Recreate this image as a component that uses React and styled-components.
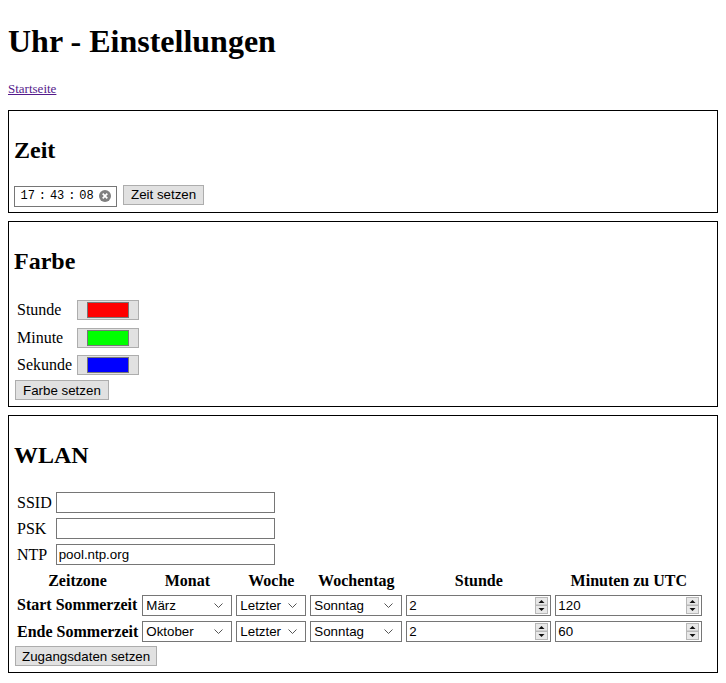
import React from 'react';
import styled, { createGlobalStyle } from 'styled-components';

const Global = createGlobalStyle`
  body {
    margin: 8px;
    font-family: "Liberation Serif", "Times New Roman", serif;
    font-size: 16px;
    color: #000;
    background: #fff;
  }
`;

const controlFont = `"Liberation Sans", Arial, sans-serif`;

const Title = styled.h1`
  font-size: 32px;
  font-weight: bold;
  margin: 15.44px 0 19.44px;
  line-height: normal;
`;

const LinkLine = styled.p`
  margin: 0 0 14px;
  padding-top: 1px;
  font-size: 13px;
  line-height: 15px;
`;

const NavLink = styled.a`
  color: #551a8b;
  text-decoration: underline;
`;

const Section = styled.div`
  border: 1px solid #000;
  padding: 5px;
  margin-bottom: 8px;
`;

const SectionTitle = styled.h2`
  font-size: 24px;
  font-weight: bold;
  margin: 19.92px 0 18.92px;
  padding-top: 1px;
  line-height: normal;
`;

const InlineRow = styled.div`
  display: flex;
  align-items: flex-end;
  gap: 6px;
  height: 24px;
`;

const Button = styled.button`
  display: block;
  box-sizing: border-box;
  font-family: ${controlFont};
  font-size: 13.33px;
  color: #000;
  background: #e1e1e1;
  border: 1px solid #adadad;
  border-radius: 0;
  height: 20px;
  padding: 0 ${p => p.$px ?? 7}px;
  margin: 0 0 ${p => p.$mb || 0}px ${p => p.$offset || 0}px;
`;

const TimeField = styled.div`
  box-sizing: border-box;
  width: 103px;
  height: 21px;
  border: 1px solid #767676;
  background: #fff;
  display: flex;
  align-items: center;
  padding: 0 5px 0 5.5px;
  font-family: "Liberation Mono", "Courier New", monospace;
  font-size: 12px;
  color: #000;
`;

const TimePart = styled.span`
  white-space: pre;
`;

const TimeSep = styled.span`
  display: inline-block;
  width: 15px;
  text-align: center;
`;

const ClearIcon = styled.svg`
  margin-left: auto;
  flex: none;
`;

const FormTable = styled.table`
  border-collapse: separate;
  border-spacing: 2px;
  padding: ${p => p.$pt || 0}px 0 0;
`;

const Td = styled.td`
  padding: 1px;
  vertical-align: middle;
`;

const Th = styled.th`
  padding: 1px;
  vertical-align: middle;
  font-weight: bold;
  text-align: ${p => (p.$left ? 'left' : 'center')};
  white-space: nowrap;
`;

const CellBox = styled.div`
  height: ${p => p.$h}px;
  width: ${p => (p.$w ? `${p.$w}px` : 'auto')};
  display: flex;
  align-items: center;
  justify-content: ${p => (p.$center ? 'center' : 'flex-start')};
  white-space: nowrap;
`;

const ColorInput = styled.input`
  -webkit-appearance: none;
  appearance: none;
  box-sizing: border-box;
  width: 62px;
  height: 20px;
  padding: 1px 9px;
  margin: 0;
  border: 1px solid #adadad;
  background: #e1e1e1;
  &::-webkit-color-swatch-wrapper {
    padding: 0;
  }
  &::-webkit-color-swatch {
    border: 1px solid #777;
    border-radius: 0;
  }
`;

const TextInput = styled.input`
  box-sizing: border-box;
  width: ${p => p.$w}px;
  height: 21px;
  margin: 0;
  padding: 0 2px;
  border: 1px solid #767676;
  border-radius: 0;
  background: #fff;
  font-family: ${controlFont};
  font-size: 13.33px;
  color: #000;
  outline: none;
`;

const ControlWrap = styled.div`
  position: relative;
  width: ${p => p.$w}px;
  height: 21px;
`;

const Select = styled.select`
  -webkit-appearance: none;
  appearance: none;
  box-sizing: border-box;
  width: 100%;
  height: 100%;
  margin: 0;
  padding: 0 0 0 3px;
  border: 1px solid #767676;
  border-radius: 0;
  background: #fff;
  font-family: ${controlFont};
  font-size: 13.33px;
  color: #000;
`;

const Chevron = styled.svg`
  position: absolute;
  right: 9px;
  top: 8px;
  pointer-events: none;
`;

const NumberInput = styled.input`
  -moz-appearance: textfield;
  box-sizing: border-box;
  width: 100%;
  height: 100%;
  margin: 0;
  padding: 0 2px;
  border: 1px solid #767676;
  border-radius: 0;
  background: #fff;
  font-family: ${controlFont};
  font-size: 13.33px;
  color: #000;
  &::-webkit-inner-spin-button,
  &::-webkit-outer-spin-button {
    -webkit-appearance: none;
    margin: 0;
  }
`;

const Spinner = styled.svg`
  position: absolute;
  right: 3px;
  top: 2px;
  pointer-events: none;
`;

function DropDown({ w, value, options }) {
  return (
    <ControlWrap $w={w}>
      <Select defaultValue={value}>
        {options.map(o => (
          <option key={o}>{o}</option>
        ))}
      </Select>
      <Chevron width="9" height="5" viewBox="0 0 9 5">
        <path d="M0.5 0.5 L4.5 4.5 L8.5 0.5" fill="none" stroke="#555" strokeWidth="1" />
      </Chevron>
    </ControlWrap>
  );
}

function NumberField({ w, value }) {
  return (
    <ControlWrap $w={w}>
      <NumberInput type="number" defaultValue={value} />
      <Spinner width="13" height="17" viewBox="0 0 13 17">
        <rect x="0.5" y="0.5" width="12" height="7.5" fill="#e8e8e8" stroke="#b8b8b8" />
        <rect x="0.5" y="8.5" width="12" height="8" fill="#e8e8e8" stroke="#b8b8b8" />
        <path d="M3.5 6 L6.5 3 L9.5 6 Z" fill="#111" />
        <path d="M3.5 11 L6.5 14 L9.5 11 Z" fill="#111" />
      </Spinner>
    </ControlWrap>
  );
}

const months = ['Januar', 'Februar', 'März', 'April', 'Mai', 'Juni', 'Juli', 'August', 'September', 'Oktober', 'November', 'Dezember'];
const weeks = ['Erster', 'Zweiter', 'Dritter', 'Vierter', 'Letzter'];
const days = ['Montag', 'Dienstag', 'Mittwoch', 'Donnerstag', 'Freitag', 'Samstag', 'Sonntag'];

const colors = [
  { label: 'Stunde', value: '#ff0000' },
  { label: 'Minute', value: '#00ff00' },
  { label: 'Sekunde', value: '#0000ff' },
];

const dst = [
  { label: 'Start Sommerzeit', month: 'März', week: 'Letzter', day: 'Sonntag', hour: 2, offset: 120 },
  { label: 'Ende Sommerzeit', month: 'Oktober', week: 'Letzter', day: 'Sonntag', hour: 2, offset: 60 },
];

export default function App() {
  return (
    <>
      <Global />
      <Title>Uhr - Einstellungen</Title>
      <LinkLine>
        <NavLink href="#">Startseite</NavLink>
      </LinkLine>

      <Section>
        <SectionTitle>Zeit</SectionTitle>
        <InlineRow>
          <TimeField>
            <TimePart>17</TimePart>
            <TimeSep>:</TimeSep>
            <TimePart>43</TimePart>
            <TimeSep>:</TimeSep>
            <TimePart>08</TimePart>
            <ClearIcon width="12" height="12" viewBox="0 0 12 12">
              <circle cx="6" cy="6" r="6" fill="#7f7f7f" />
              <path d="M3.7 3.7 L8.3 8.3 M8.3 3.7 L3.7 8.3" stroke="#fff" strokeWidth="1.7" />
            </ClearIcon>
          </TimeField>
          <Button $mb={2}>Zeit setzen</Button>
        </InlineRow>
      </Section>

      <Section>
        <SectionTitle>Farbe</SectionTitle>
        <FormTable $pt={2}>
          <tbody>
            {colors.map(c => (
              <tr key={c.label}>
                <Td>
                  <CellBox $h={23.5} $w={56}>{c.label}</CellBox>
                </Td>
                <Td>
                  <CellBox $h={23.5}>
                    <ColorInput type="color" defaultValue={c.value} />
                  </CellBox>
                </Td>
              </tr>
            ))}
          </tbody>
        </FormTable>
        <Button $offset={1} $mb={1}>Farbe setzen</Button>
      </Section>

      <Section>
        <SectionTitle>WLAN</SectionTitle>
        <FormTable $pt={1}>
          <tbody>
            {[
              ['SSID', ''],
              ['PSK', ''],
              ['NTP', 'pool.ntp.org'],
            ].map(([label, value]) => (
              <tr key={label}>
                <Td>
                  <CellBox $h={22}>{label}</CellBox>
                </Td>
                <Td>
                  <CellBox $h={22}>
                    <TextInput $w={219} type="text" defaultValue={value} />
                  </CellBox>
                </Td>
              </tr>
            ))}
          </tbody>
        </FormTable>
        <FormTable>
          <tbody>
            <tr>
              <Th><CellBox $h={18.4} $w={121} $center>Zeitzone</CellBox></Th>
              <Th><CellBox $h={18.4} $center>Monat</CellBox></Th>
              <Th><CellBox $h={18.4} $center>Woche</CellBox></Th>
              <Th><CellBox $h={18.4} $center>Wochentag</CellBox></Th>
              <Th><CellBox $h={18.4} $center>Stunde</CellBox></Th>
              <Th><CellBox $h={18.4} $center>Minuten zu UTC</CellBox></Th>
            </tr>
            {dst.map(r => (
              <tr key={r.label}>
                <Th $left><CellBox $h={22.5}>{r.label}</CellBox></Th>
                <Td><CellBox $h={22.5}><DropDown w={90} value={r.month} options={months} /></CellBox></Td>
                <Td><CellBox $h={22.5}><DropDown w={70} value={r.week} options={weeks} /></CellBox></Td>
                <Td><CellBox $h={22.5}><DropDown w={92} value={r.day} options={days} /></CellBox></Td>
                <Td><CellBox $h={22.5}><NumberField w={145} value={r.hour} /></CellBox></Td>
                <Td><CellBox $h={22.5}><NumberField w={147} value={r.offset} /></CellBox></Td>
              </tr>
            ))}
          </tbody>
        </FormTable>
        <Button $offset={1} $mb={1} $px={6}>Zugangsdaten setzen</Button>
      </Section>
    </>
  );
}
